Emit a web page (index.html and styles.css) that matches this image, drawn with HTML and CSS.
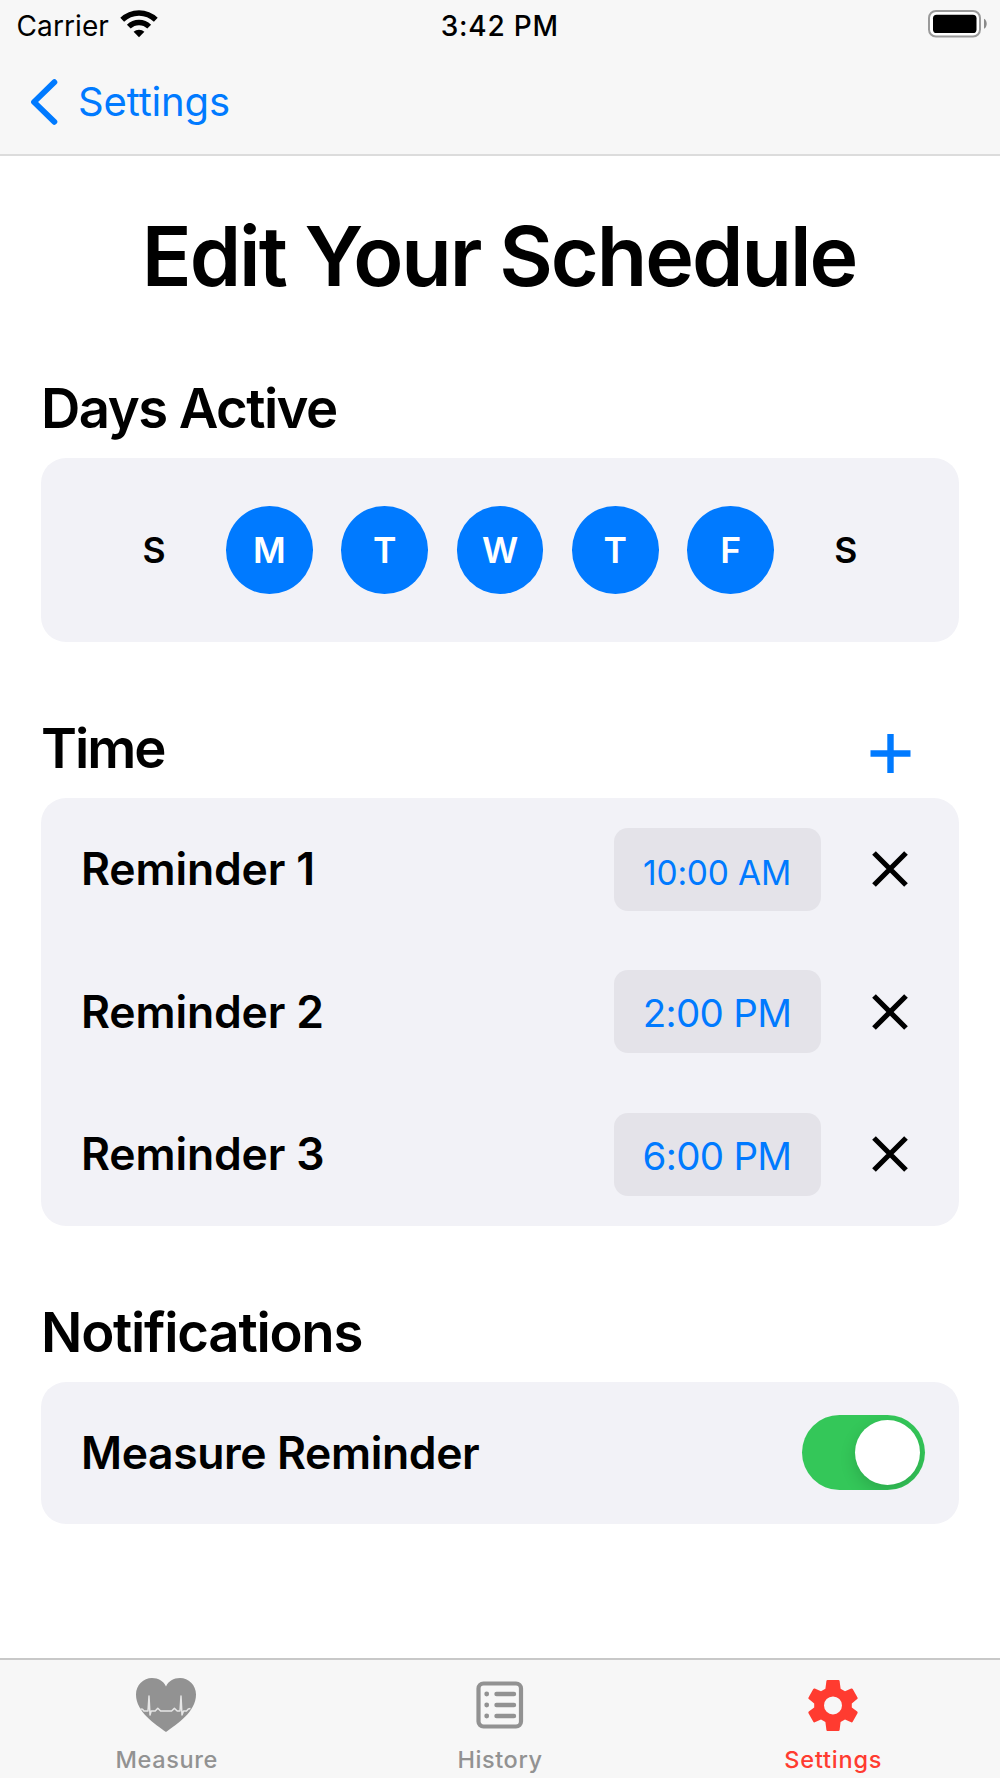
FILE: index.html
```html
<!DOCTYPE html>
<html lang="en">
<head>
    <meta charset="UTF-8">
    <meta name="viewport" content="width=device-width, initial-scale=1.0">
    <title>Edit Your Schedule</title>
    <link rel="stylesheet" href="styles.css">
</head>
<body>
    <header>
        <div class="status-bar">
            <div class="carrier">
                <span>Carrier</span>
                <svg class="wifi" width="38" height="28" viewBox="0 0 38 28">
                    <path d="M2.2 9.8a24 24 0 0 1 33.6 0" fill="none" stroke="#000" stroke-width="5.4"/>
                    <path d="M8.8 16.6a14.6 14.6 0 0 1 20.4 0" fill="none" stroke="#000" stroke-width="5.4"/>
                    <path d="M19 27.2l-5.4-5.4a7.8 7.8 0 0 1 10.8 0z"/>
                </svg>
            </div>
            <span class="clock">3:42 PM</span>
            <svg class="battery" width="60" height="28" viewBox="0 0 60 28">
                <rect x="1" y="1" width="51" height="25.5" rx="7" fill="#fff" stroke="#9a9a9a" stroke-width="2"/>
                <rect x="5" y="4.7" width="43.5" height="18.3" rx="3.6"/>
                <path d="M56 8.8c3.6 1.6 3.6 8.4 0 10z" fill="#8a8a8a"/>
            </svg>
        </div>
        <nav class="nav-bar">
            <a class="back" href="#">
                <svg width="28" height="46" viewBox="0 0 28 46">
                    <path d="M24.4 3.2L4 23l20.4 19.8" fill="none" stroke="#007aff" stroke-width="5.8" stroke-linecap="round" stroke-linejoin="round"/>
                </svg>
                <span>Settings</span>
            </a>
        </nav>
    </header>

    <main>
        <h1>Edit Your Schedule</h1>

        <section>
            <h2 class="h-days">Days Active</h2>
            <div class="card days">
                <span class="day">S</span>
                <span class="day active">M</span>
                <span class="day active">T</span>
                <span class="day active">W</span>
                <span class="day active">T</span>
                <span class="day active">F</span>
                <span class="day">S</span>
            </div>
        </section>

        <section>
            <div class="section-head">
                <h2 class="h-time">Time</h2>
                <svg class="add" width="41" height="41" viewBox="0 0 41 41">
                    <path d="M20.5 1v39M.5 20.5h40" stroke="#007aff" stroke-width="6.4"/>
                </svg>
            </div>
            <div class="card">
                <div class="row">
                    <span class="label">Reminder 1</span>
                    <span class="time small">10:00 AM</span>
                    <svg class="remove" width="36" height="36" viewBox="0 0 36 36">
                        <path d="M2 2l32 32M34 2L2 34"/>
                    </svg>
                </div>
                <div class="row">
                    <span class="label">Reminder 2</span>
                    <span class="time">2:00 PM</span>
                    <svg class="remove" width="36" height="36" viewBox="0 0 36 36">
                        <path d="M2 2l32 32M34 2L2 34"/>
                    </svg>
                </div>
                <div class="row">
                    <span class="label">Reminder 3</span>
                    <span class="time">6:00 PM</span>
                    <svg class="remove" width="36" height="36" viewBox="0 0 36 36">
                        <path d="M2 2l32 32M34 2L2 34"/>
                    </svg>
                </div>
            </div>
        </section>

        <section>
            <h2 class="h-notif">Notifications</h2>
            <div class="card">
                <div class="row single">
                    <span class="label wide">Measure Reminder</span>
                    <span class="toggle"><span class="knob"></span></span>
                </div>
            </div>
        </section>
    </main>

    <footer class="tab-bar">
        <a class="tab" href="#">
            <svg class="heart" width="60" height="56" viewBox="0 0 60 56">
                <path d="M30 55C19 47 0 35 0 17.5C0 8 7.5 1 16 1c6.5 0 11.5 3 14 8.5C32.5 4 37.5 1 44 1c8.5 0 16 7 16 16.5C60 35 41 47 30 55z" fill="#929292"/>
                <path d="M4.5 32l2 .2L8 34h4l1-15 1 19 1.200-4h4l2.600-2.800 2.800 2.800h11l2.800-2.600 2.800 2.600h2.800l1-15 1 19 1.500-4h3l1.800-2 2.200-.5" fill="none" stroke="#e6e6e6" stroke-width="1.5" stroke-linejoin="round"/>
            </svg>
            <span>Measure</span>
        </a>
        <a class="tab" href="#">
            <svg width="48" height="56" viewBox="0 0 48 56">
                <rect x="2.5" y="6.5" width="42.5" height="43" rx="5" fill="none" stroke="#929292" stroke-width="4.2"/>
                <path d="M20.5 17H38M20.5 28H38M20.5 39H38" stroke="#929292" stroke-width="4.4" stroke-linecap="round"/>
                <g fill="#929292">
                    <circle cx="10.7" cy="17" r="2.4"/>
                    <circle cx="10.7" cy="28" r="2.4"/>
                    <circle cx="10.7" cy="39" r="2.4"/>
                </g>
            </svg>
            <span>History</span>
        </a>
        <a class="tab selected" href="#">
            <svg width="50" height="56" viewBox="0 0 50 56">
                <path fill="#ff3b30" fill-rule="evenodd" d="M19.5 3h11q1 0 1.100 1l1 7.800 4.400 2.500 6.200-2.800q1-.3 1.500.5l4.800 8.400q.5 1-.3 1.600L43.8 26.400v4l5.400 4.200q.8.700.3 1.600l-4.800 8.600q-.5.800-1.500.5L37 42.600l-4.400 2.500-1 7.800q-.1 1-1.100 1h-11q-1 0-1.100-1l-1-7.800-4.400-2.500-6.200 2.700q-1 .3-1.500-.5L.5 36.200q-.5-.9.3-1.600l5.400-4.200v-4L.8 22Q0 21.400.5 20.400L5.300 12q.5-.8 1.500-.5l6.200 2.800 4.400-2.500 1-7.800q.1-1 1.100-1zM25 19.400a9 9 0 1 0 0 18a9 9 0 1 0 0-18z"/>
            </svg>
            <span>Settings</span>
        </a>
    </footer>
</body>
</html>
```
FILE: styles.css
```css
* {
    margin: 0;
    padding: 0;
    box-sizing: border-box;
}

body {
    font-family: 'Inter', 'Liberation Sans', sans-serif;
    background: #fff;
    color: #000;
    height: 1778px;
    display: flex;
    flex-direction: column;
}

svg {
    display: block;
    flex: none;
}

a {
    text-decoration: none;
}

header {
    height: 156px;
    background: #f7f7f7;
    border-bottom: 2px solid #dcdcdc;
}

.status-bar {
    height: 51px;
    padding: 0 12px 0 16.5px;
    display: grid;
    grid-template-columns: 1fr auto 1fr;
    align-items: center;
    font-size: 28px;
}

.carrier {
    display: flex;
    align-items: center;
    gap: 11px;
    letter-spacing: 0.1px;
}

.wifi {
    margin-bottom: 4px;
}

.clock {
    margin-right: 5px;
    font-weight: 500;
    letter-spacing: 0.75px;
}

.battery {
    justify-self: end;
    margin-bottom: 3px;
}

.nav-bar {
    height: 101px;
    padding-left: 30px;
    display: flex;
    align-items: center;
}

.back {
    display: flex;
    align-items: center;
    gap: 20px;
    color: #007aff;
    font-size: 40px;
    letter-spacing: -0.15px;
}

main {
    flex: 1;
    padding: 50px 41px 0;
}

h1 {
    margin-bottom: 72px;
    padding-right: 2px;
    font-size: 82.5px;
    line-height: 100px;
    font-weight: 600;
    letter-spacing: -2.05px;
    text-align: center;
    white-space: nowrap;
}

h2 {
    margin-bottom: 20px;
    font-size: 54.5px;
    line-height: 60px;
    font-weight: 600;
}

.h-days {
    letter-spacing: -1.55px;
}

.h-time {
    letter-spacing: -2px;
}

.h-notif {
    letter-spacing: -1.25px;
}

section {
    margin-bottom: 76.5px;
}

.section-head {
    display: flex;
    justify-content: space-between;
}

.add {
    margin: 15px 48px 0 0;
}

.card {
    background: #f2f2f7;
    border-radius: 25px;
}

.days {
    height: 183.5px;
    display: flex;
    align-items: center;
    justify-content: center;
    gap: 28.5px;
}

.day {
    width: 86.8px;
    height: 87.5px;
    border-radius: 50%;
    font-size: 35.5px;
    line-height: 89px;
    font-weight: 600;
    text-align: center;
}

.day.active {
    background: #007aff;
    color: #fff;
}

.row {
    height: 142.5px;
    padding: 0 34px 0 40px;
    display: flex;
    align-items: center;
}

.row.single {
    height: 141.5px;
}

.label {
    flex: 1;
    font-size: 44.5px;
    font-weight: 600;
    letter-spacing: -0.15px;
}

.label.wide {
    letter-spacing: -0.4px;
}

.time {
    width: 207px;
    height: 83px;
    padding-right: 1px;
    border-radius: 14px;
    background: #e4e3e9;
    color: #007aff;
    font-size: 38.5px;
    line-height: 86px;
    letter-spacing: -0.7px;
    text-align: center;
    white-space: nowrap;
}

.time.small {
    font-size: 33.5px;
    line-height: 90px;
    letter-spacing: -0.2px;
}

.remove {
    margin: 0 17px 0 51px;
    stroke: #000;
    stroke-width: 5.2;
}

.toggle {
    width: 123px;
    height: 75px;
    padding: 5px;
    border-radius: 38px;
    background: #34c759;
    display: flex;
    justify-content: flex-end;
    overflow: hidden;
}

.knob {
    width: 65px;
    height: 65px;
    border-radius: 50%;
    background: #fff;
    box-shadow: 0 6px 16px rgba(0, 0, 0, 0.15);
}

.tab-bar {
    height: 120px;
    padding-top: 17px;
    background: #f7f7f7;
    border-top: 2px solid #c8c8c8;
    display: flex;
}

.tab {
    flex: 1;
    display: flex;
    flex-direction: column;
    align-items: center;
    gap: 11px;
    color: #929292;
    font-size: 23.5px;
    line-height: 32px;
    font-weight: 500;
    letter-spacing: 0.6px;
}

.heart {
    margin-right: 2px;
}

.tab.selected {
    color: #ff3b30;
    letter-spacing: 0.8px;
}
```
